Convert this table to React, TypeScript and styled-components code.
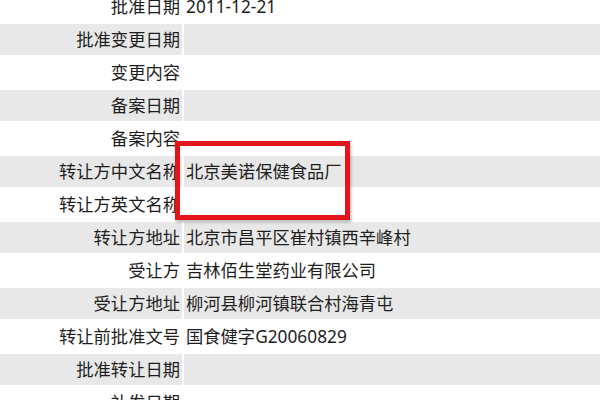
import React from "react";
import styled, { createGlobalStyle } from "styled-components";

const Global = createGlobalStyle`
  html, body { margin: 0; padding: 0; background: #fff; overflow: hidden; }
  body { width: 600px; height: 400px; }
`;

const Page = styled.div`
  position: relative;
  width: 600px;
  height: 400px;
  overflow: hidden;
`;

const Table = styled.table`
  border-collapse: separate;
  border-spacing: 2px;
  margin: -11px 0 0 -2px;
  width: 640px;
  font-family: "Noto Sans", "Noto Sans CJK SC", sans-serif;
  font-size: 17.3px;
  color: #1e1e1e;
`;

const Row = styled.tr<{ $shade: boolean }>`
  td {
    background: ${(p) => (p.$shade ? "#e8e8e8" : "#fff")};
  }
`;

const Label = styled.td`
  width: 178px;
  height: 31px;
  padding: 0 2px;
  text-align: right;
  white-space: nowrap;
  vertical-align: middle;
  line-height: 31px;
`;

const Value = styled.td`
  height: 31px;
  padding: 0 2px;
  text-align: left;
  white-space: nowrap;
  vertical-align: middle;
  line-height: 31px;
`;

const Highlight = styled.div`
  position: absolute;
  left: 175px;
  top: 141px;
  width: 175px;
  height: 79px;
  box-sizing: border-box;
  border: 5px solid #e3151c;
  box-shadow: 1px 2px 3px rgba(0, 0, 0, 0.3);
  pointer-events: none;
`;

const rows: [string, string][] = [
  ["批准日期", "2011-12-21"],
  ["批准变更日期", ""],
  ["变更内容", ""],
  ["备案日期", ""],
  ["备案内容", ""],
  ["转让方中文名称", "北京美诺保健食品厂"],
  ["转让方英文名称", ""],
  ["转让方地址", "北京市昌平区崔村镇西辛峰村"],
  ["受让方", "吉林佰生堂药业有限公司"],
  ["受让方地址", "柳河县柳河镇联合村海青屯"],
  ["转让前批准文号", "国食健字G20060829"],
  ["批准转让日期", ""],
  ["补发日期", ""],
];

export default function App() {
  return (
    <Page>
      <Global />
      <Table>
        <tbody>
          {rows.map(([k, v], i) => (
            <Row key={k} $shade={i % 2 === 1}>
              <Label>{k}</Label>
              <Value>{v}</Value>
            </Row>
          ))}
        </tbody>
      </Table>
      <Highlight />
    </Page>
  );
}
